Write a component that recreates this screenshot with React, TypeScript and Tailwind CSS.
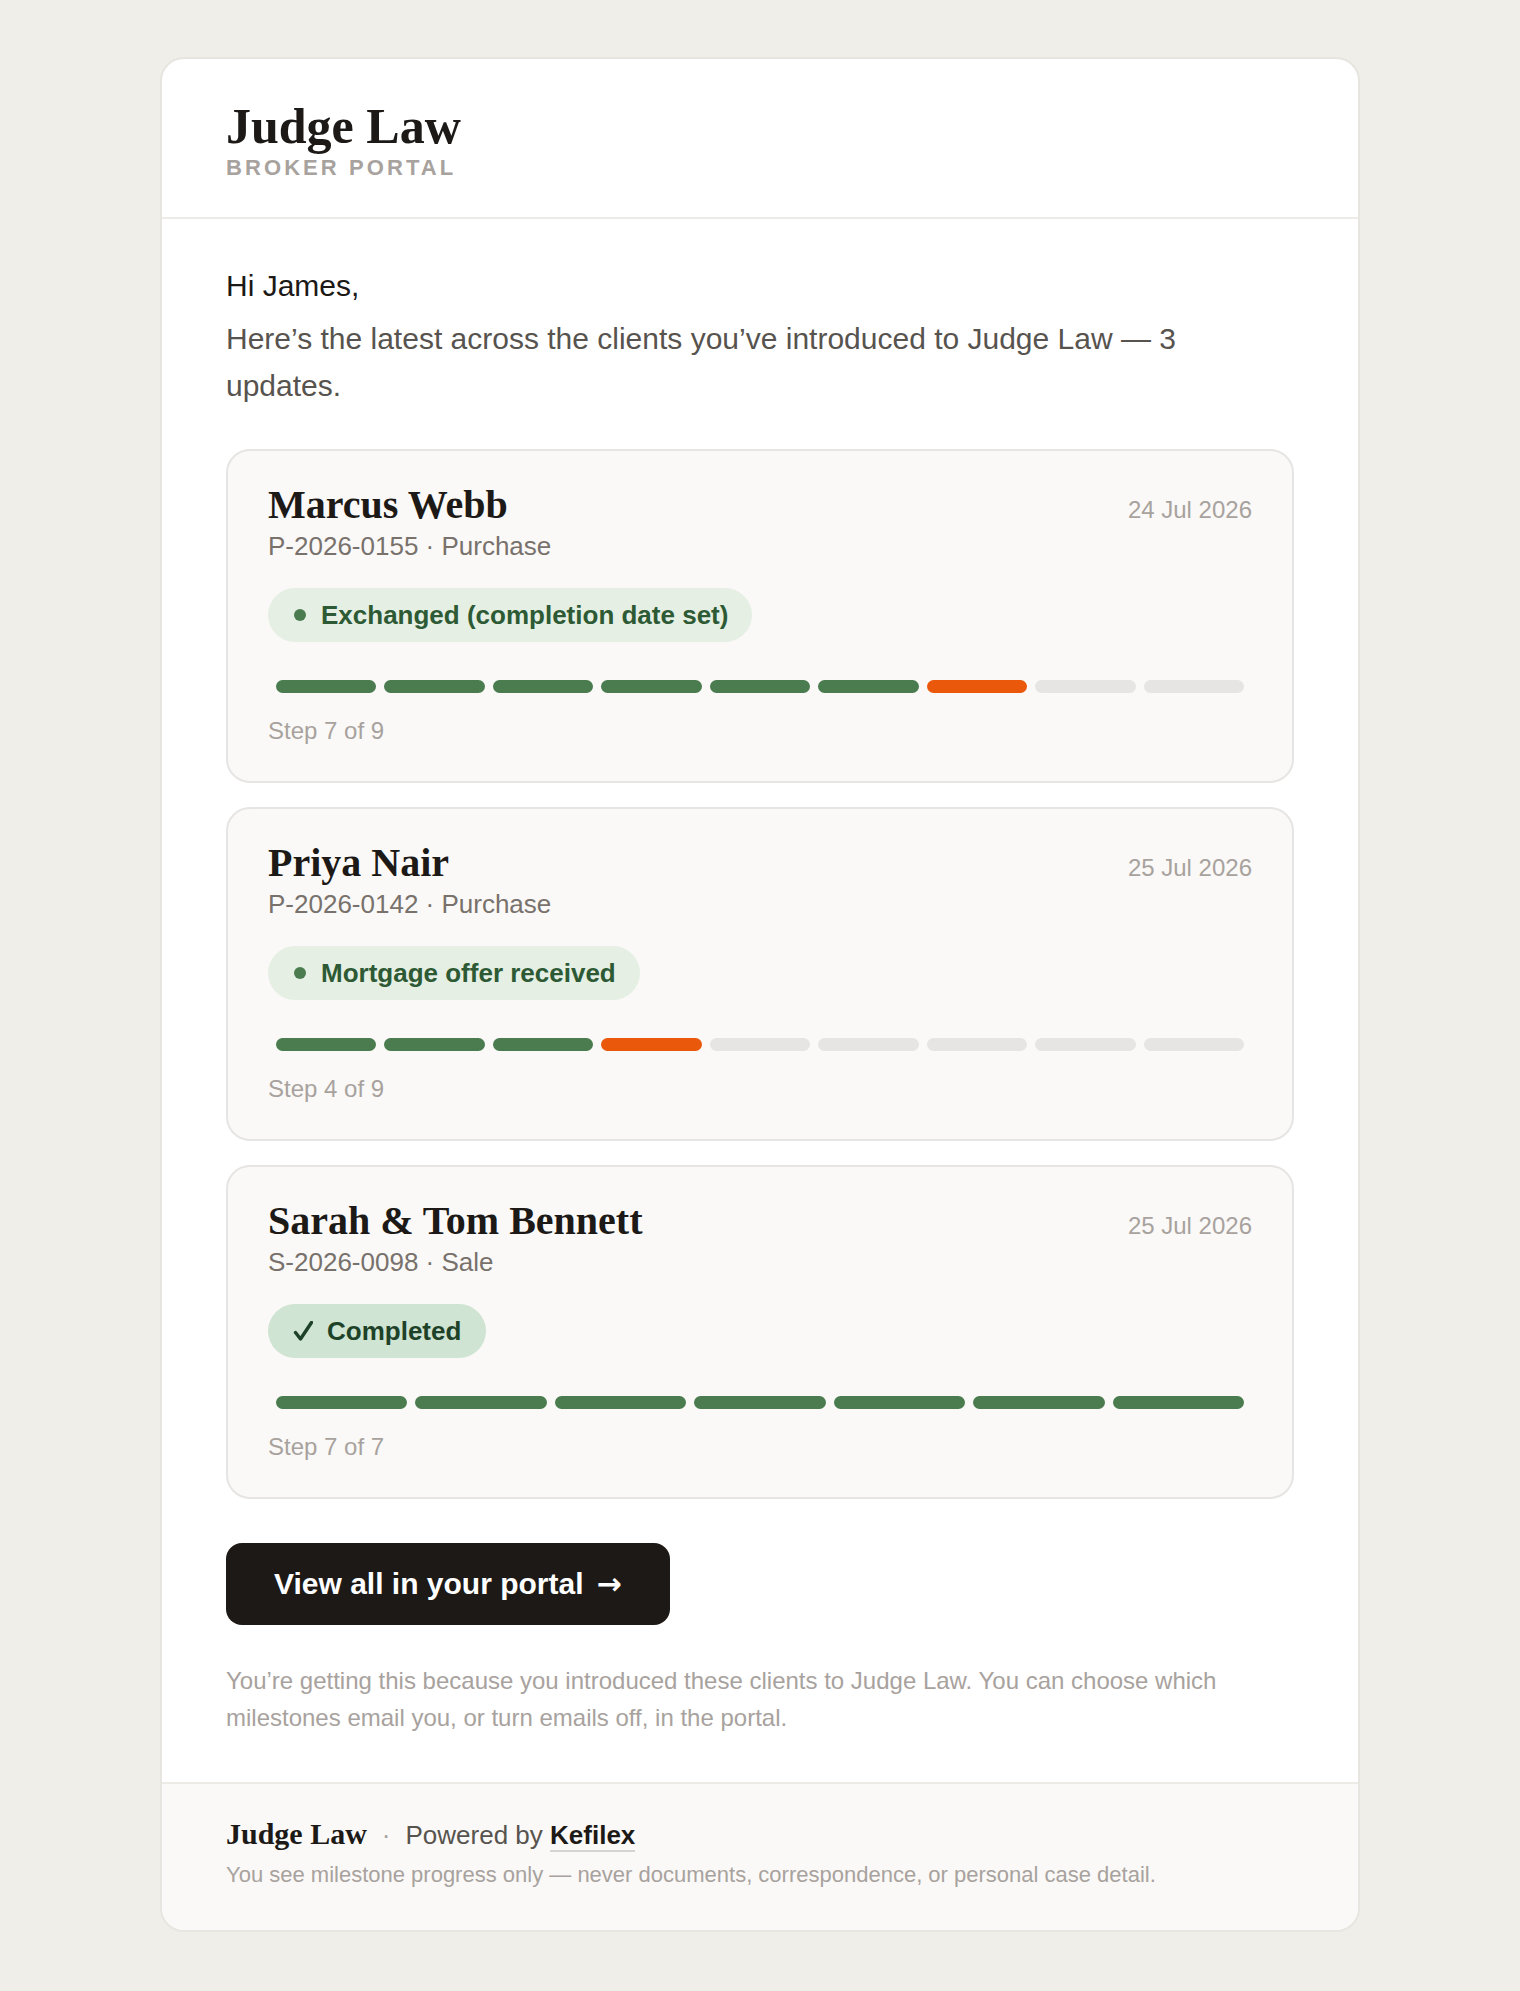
import React from 'react';

type Client = {
  name: string;
  date: string;
  reference: string;
  kind: string;
  status: string;
  done: boolean;
  step: number;
  total: number;
};

const clients: Client[] = [
  {
    name: 'Marcus Webb',
    date: '24 Jul 2026',
    reference: 'P-2026-0155',
    kind: 'Purchase',
    status: 'Exchanged (completion date set)',
    done: false,
    step: 7,
    total: 9,
  },
  {
    name: 'Priya Nair',
    date: '25 Jul 2026',
    reference: 'P-2026-0142',
    kind: 'Purchase',
    status: 'Mortgage offer received',
    done: false,
    step: 4,
    total: 9,
  },
  {
    name: 'Sarah & Tom Bennett',
    date: '25 Jul 2026',
    reference: 'S-2026-0098',
    kind: 'Sale',
    status: 'Completed',
    done: true,
    step: 7,
    total: 7,
  },
];

const serif = "font-['Liberation_Serif',Georgia,serif]";

function StatusPill({ client }: { client: Client }) {
  if (client.done) {
    return (
      <div className="inline-flex h-[54px] items-center rounded-full bg-[#cfe4d3] pl-[25px] pr-[25px] text-[26px] font-bold text-[#1e4228]">
        <svg viewBox="0 0 20 20" className="mr-[14px] h-[20px] w-[20px]" fill="none">
          <path d="M2.5 11.5 L7.5 18 L18.5 1.5" stroke="currentColor" strokeWidth="3.4" strokeLinecap="round" strokeLinejoin="round" />
        </svg>
        <span>{client.status}</span>
      </div>
    );
  }
  return (
    <div className="inline-flex h-[54px] items-center rounded-full bg-[#e5efe4] pl-[26px] pr-[24px] text-[26px] font-bold text-[#2d5a34]">
      <span className="mr-[15px] h-[12px] w-[12px] rounded-full bg-[#4a7c50]" />
      <span>{client.status}</span>
    </div>
  );
}

function Progress({ step, total, done }: { step: number; total: number; done: boolean }) {
  return (
    <div className="mt-[38px] flex gap-[8px] px-[8px]">
      {Array.from({ length: total }, (_, i) => {
        let colour = 'bg-[#e6e5e3]';
        if (i < step - 1 || (done && i < step)) colour = 'bg-[#4a7c50]';
        else if (i === step - 1) colour = 'bg-[#ea580c]';
        return <div key={i} className={`h-[13px] flex-1 rounded-full ${colour}`} />;
      })}
    </div>
  );
}

function ClientCard({ client }: { client: Client }) {
  return (
    <div className="rounded-[24px] border-2 border-[#e7e5e3] bg-[#faf9f7] px-[40px] pt-[32px] pb-[32px]">
      <div className="flex items-baseline justify-between">
        <h3 className={`${serif} text-[40px] font-bold leading-[44px] text-[#1c1917]`}>{client.name}</h3>
        <span className="text-[24px] text-[#a8a29e]">{client.date}</span>
      </div>
      <p className="text-[26px] leading-[36px] text-[#78716c]">
        {client.reference} · {client.kind}
      </p>
      <div className="mt-[24px] flex">
        <StatusPill client={client} />
      </div>
      <Progress step={client.step} total={client.total} done={client.done} />
      <p className="mt-[20px] text-[24px] leading-[36px] text-[#a8a29e]">
        Step {client.step} of {client.total}
      </p>
    </div>
  );
}

export default function App() {
  return (
    <div className="min-h-screen bg-[#efeee9] pt-[57px] pb-[61px] font-['Liberation_Sans',Arial,sans-serif]">
      <div className="mx-auto w-[1200px] overflow-hidden rounded-[24px] border-2 border-[#e6e5e0] bg-white">
        <div className="border-b-2 border-[#ecebe6] px-[64px] pt-[38px] pb-[36px]">
          <h1 className={`${serif} text-[50px] font-bold leading-[58px] text-[#1c1917]`}>Judge Law</h1>
          <div className="text-[22px] font-bold uppercase leading-[26px] tracking-[0.14em] text-[#a8a29e]">
            Broker Portal
          </div>
        </div>

        <div className="px-[64px] pt-[43px] pb-[46px]">
          <p className="text-[30px] leading-[47px] text-[#1c1917]">Hi James,</p>
          <p className="mt-[6px] text-[30px] leading-[47px] text-[#57534e]">
            Here’s the latest across the clients you’ve introduced to Judge Law — 3 updates.
          </p>

          <div className="mt-[40px] flex flex-col gap-[24px]">
            {clients.map((c) => (
              <ClientCard key={c.reference} client={c} />
            ))}
          </div>

          <div className="mt-[44px] flex">
            <a
              href="#"
              className="rounded-[16px] bg-[#1c1917] pl-[48px] pr-[48px] py-[23px] text-[30px] font-bold leading-[36px] text-white"
            >
              View all in your portal
              <span className="ml-[13px] font-['DejaVu_Sans',sans-serif]">→</span>
            </a>
          </div>

          <p className="mt-[37px] text-[24px] leading-[37px] text-[#a8a29e]">
            You’re getting this because you introduced these clients to Judge Law. You can choose which milestones
            email you, or turn emails off, in the portal.
          </p>
        </div>

        <div className="border-t-2 border-[#ecebe6] bg-[#faf9f7] px-[64px] pt-[32px] pb-[39px]">
          <div className="text-[26px] leading-[36px] text-[#57534e]">
            <span className={`${serif} text-[30px] font-bold text-[#1c1917]`}>Judge Law</span>
            <span className="mx-[15px] text-[#a8a29e]">·</span>
            <span>Powered by </span>
            <span className="border-b-2 border-[#d6d3d1] font-bold text-[#1c1917]">Kefilex</span>
          </div>
          <p className="mt-[5px] text-[22px] leading-[33px] text-[#a8a29e]">
            You see milestone progress only — never documents, correspondence, or personal case detail.
          </p>
        </div>
      </div>
    </div>
  );
}
